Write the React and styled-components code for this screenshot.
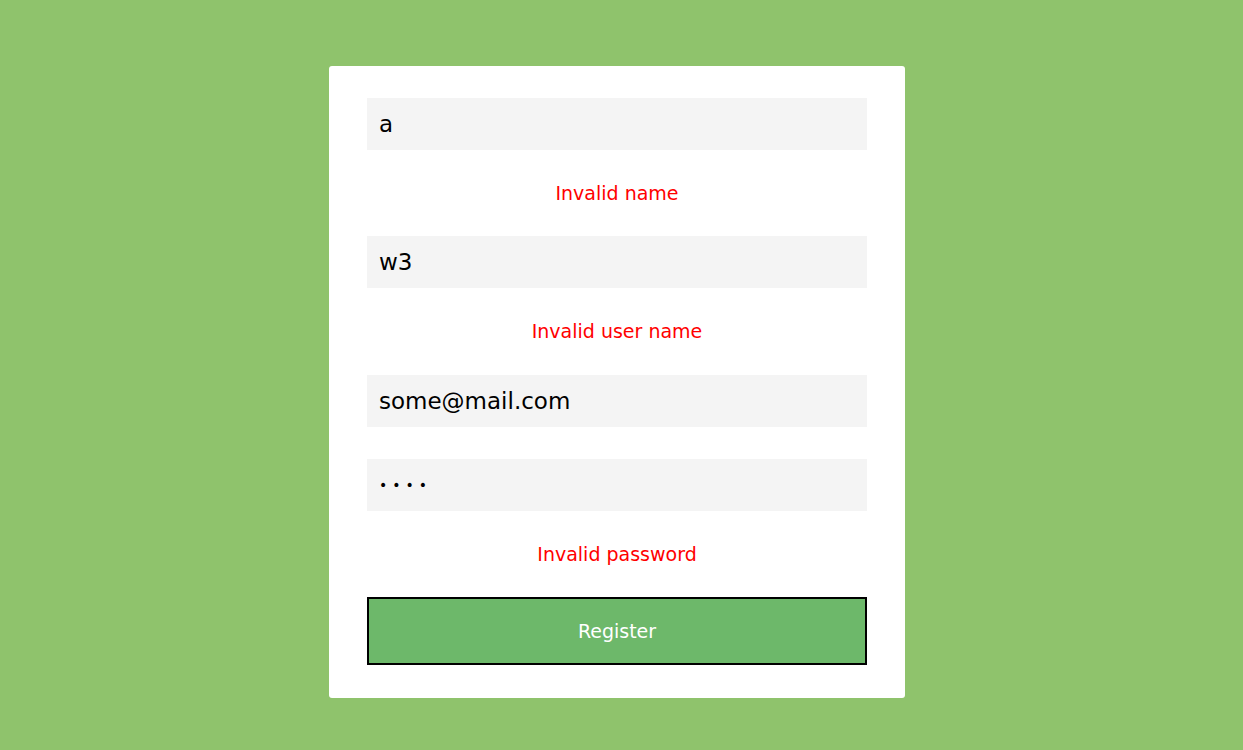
import React, { useState } from "react";
import styled, { createGlobalStyle } from "styled-components";

const GlobalStyle = createGlobalStyle`
  html, body {
    margin: 0;
    padding: 0;
    background: #8fc36c;
    font-family: "DejaVu Sans", "Liberation Sans", sans-serif;
  }
`;

const Page = styled.div`
  min-height: 750px;
  display: flex;
  justify-content: center;
  align-items: flex-start;
  padding: 66px 9px 0 0;
  box-sizing: border-box;
`;

const Card = styled.form`
  width: 576px;
  box-sizing: border-box;
  background: #fff;
  border-radius: 3px;
  padding: 32px 38px 33px;
  display: flex;
  flex-direction: column;
  gap: 32px;
`;

const Input = styled.input`
  height: 52px;
  box-sizing: border-box;
  width: 100%;
  border: none;
  outline: none;
  background: #f4f4f4;
  padding: 0 12px;
  font-family: inherit;
  font-size: ${(p) => (p.type === "password" ? "14px" : "23px")};
  letter-spacing: ${(p) => (p.type === "password" ? "5px" : "normal")};
  color: #000;
`;

const Error = styled.div`
  height: 22.4px;
  line-height: 22.4px;
  text-align: center;
  color: #ff0000;
  font-size: 19px;
`;

const Button = styled.button`
  height: 68px;
  width: 100%;
  background: #6db86a;
  border: 2px solid #000;
  color: #fff;
  font-family: inherit;
  font-size: 19px;
  cursor: pointer;
`;

export default function App() {
  const [name, setName] = useState("a");
  const [user, setUser] = useState("w3");
  const [email, setEmail] = useState("some@mail.com");
  const [pass, setPass] = useState("1234");

  return (
    <>
      <GlobalStyle />
      <Page>
        <Card onSubmit={(e) => e.preventDefault()}>
          <Input value={name} onChange={(e) => setName(e.target.value)} />
          <Error>Invalid name</Error>
          <Input value={user} onChange={(e) => setUser(e.target.value)} />
          <Error>Invalid user name</Error>
          <Input value={email} onChange={(e) => setEmail(e.target.value)} />
          <Input
            type="password"
            value={pass}
            onChange={(e) => setPass(e.target.value)}
          />
          <Error>Invalid password</Error>
          <Button type="submit">Register</Button>
        </Card>
      </Page>
    </>
  );
}
